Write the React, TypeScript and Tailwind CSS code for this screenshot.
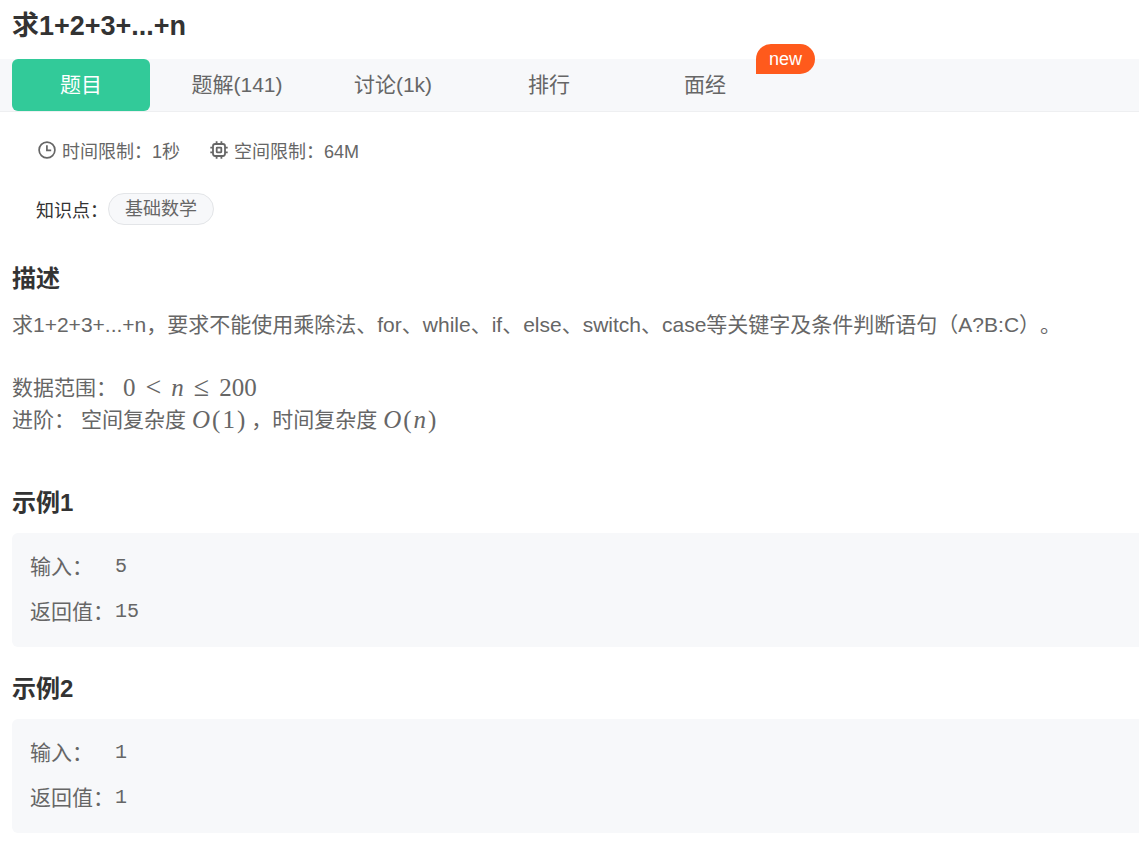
import type { ReactNode } from "react";

type Tab = { label: string; active?: boolean; badge?: string };

const tabs: Tab[] = [
  { label: "题目", active: true },
  { label: "题解(141)" },
  { label: "讨论(1k)" },
  { label: "排行" },
  { label: "面经", badge: "new" },
];

const examples = [
  { title: "示例1", input: "5", output: "15" },
  { title: "示例2", input: "1", output: "1" },
];

function ClockIcon() {
  return (
    <svg viewBox="0 0 18 18" className="size-[18px] shrink-0" fill="none" stroke="currentColor" strokeWidth="1.7" aria-hidden="true">
      <circle cx="9" cy="9" r="7.9" />
      <path d="M8.9 4.2v5.2h4.3" />
    </svg>
  );
}

function ChipIcon() {
  return (
    <svg viewBox="0 0 18 18" className="size-[18px] shrink-0" fill="none" stroke="currentColor" strokeWidth="1.8" aria-hidden="true">
      <rect x="3" y="3" width="12" height="12" rx="2.2" />
      <rect x="6.7" y="6.7" width="4.6" height="4.6" rx="0.5" />
      <path d="M6.6 0.3v2.7M11.4 0.3v2.7M6.6 15v2.7M11.4 15v2.7M0.3 6.6h2.7M0.3 11.4h2.7M15 6.6h2.7M15 11.4h2.7" />
    </svg>
  );
}

function MathText({ children }: { children: ReactNode }) {
  return (
    <span className="inline-flex items-baseline gap-0.5 font-['Liberation_Serif',serif] text-[25px] leading-8">
      {children}
    </span>
  );
}

function Relation({ children }: { children: ReactNode }) {
  return <span className="px-2 text-[28px] leading-7">{children}</span>;
}

function Heading({ children }: { children: ReactNode }) {
  return <h2 className="text-2xl leading-8 font-bold text-[#333]">{children}</h2>;
}

function Example({ title, input, output }: { title: string; input: string; output: string }) {
  return (
    <section className="mb-[26px] pl-3">
      <Heading>{title}</Heading>
      <dl className="mt-[14px] grid auto-rows-[45px] grid-cols-[85px_1fr] rounded-l-md bg-[#f7f8fa] px-[18px] py-3 leading-[43px]">
        <dt>输入：</dt>
        <dd className="font-['Liberation_Mono',monospace] text-xl leading-[43px]">{input}</dd>
        <dt>返回值：</dt>
        <dd className="font-['Liberation_Mono',monospace] text-xl leading-[43px]">{output}</dd>
      </dl>
    </section>
  );
}

export default function App() {
  return (
    <main className="bg-white font-['Liberation_Sans','Noto_Sans_CJK_SC',sans-serif] text-[21px] text-[#666] [text-spacing-trim:space-all]">
      <h1 className="px-3 pt-2 pb-[15px] text-[27px] leading-9 font-bold text-[#333]">求1+2+3+...+n</h1>

      <nav className="flex gap-[18px] border-b border-[#eeeff1] bg-[#f7f8fa] pl-3">
        {tabs.map((tab) => (
          <a
            key={tab.label}
            href="#"
            className={
              tab.active
                ? "relative w-[138px] rounded-md bg-[#32ca99] text-center leading-[52px] text-white"
                : "relative w-[138px] text-center leading-[52px]"
            }
          >
            {tab.label}
            {tab.badge && (
              <span className="absolute -top-[15px] left-[120px] rounded-full rounded-bl-none bg-[#ff5a1c] px-[13px] text-lg leading-[30px] text-white">
                {tab.badge}
              </span>
            )}
          </a>
        ))}
      </nav>

      <div className="flex gap-[30px] pt-6 pl-[38px] text-lg leading-8">
        <div className="flex items-start gap-[6px]">
          <span className="pt-[5px]">
            <ClockIcon />
          </span>
          <span>时间限制：1秒</span>
        </div>
        <div className="flex items-start gap-[6px]">
          <span className="pt-[5px]">
            <ChipIcon />
          </span>
          <span>空间限制：64M</span>
        </div>
      </div>

      <div className="mt-[25px] flex items-center pl-9 text-lg">
        <span className="pt-1 text-[#333]">知识点：</span>
        <a href="#" className="rounded-full border border-[#e3e5e8] bg-[#f7f8fa] px-4 leading-[30px]">
          基础数学
        </a>
      </div>

      <section className="mt-[38px] mb-[51px] px-3">
        <Heading>描述</Heading>
        <p className="mt-[14px] leading-8">
          求1+2+3+...+n，要求不能使用乘除法、for、while、if、else、switch、case等关键字及条件判断语句（A?B:C）。
        </p>
        <div className="mt-[31px] leading-8">
          <p className="flex gap-[6px]">
            <span>数据范围：</span>
            <MathText>
              <span>0</span>
              <Relation>&lt;</Relation>
              <i>n</i>
              <Relation>≤</Relation>
              <span>200</span>
            </MathText>
          </p>
          <p className="flex gap-[6px]">
            <span>进阶：</span>
            <span>空间复杂度</span>
            <MathText>
              <i>O</i>
              <span>(</span>
              <span>1</span>
              <span>)</span>
            </MathText>
            <span>，时间复杂度</span>
            <MathText>
              <i>O</i>
              <span>(</span>
              <i>n</i>
              <span>)</span>
            </MathText>
          </p>
        </div>
      </section>

      {examples.map((example) => (
        <Example key={example.title} {...example} />
      ))}
    </main>
  );
}
